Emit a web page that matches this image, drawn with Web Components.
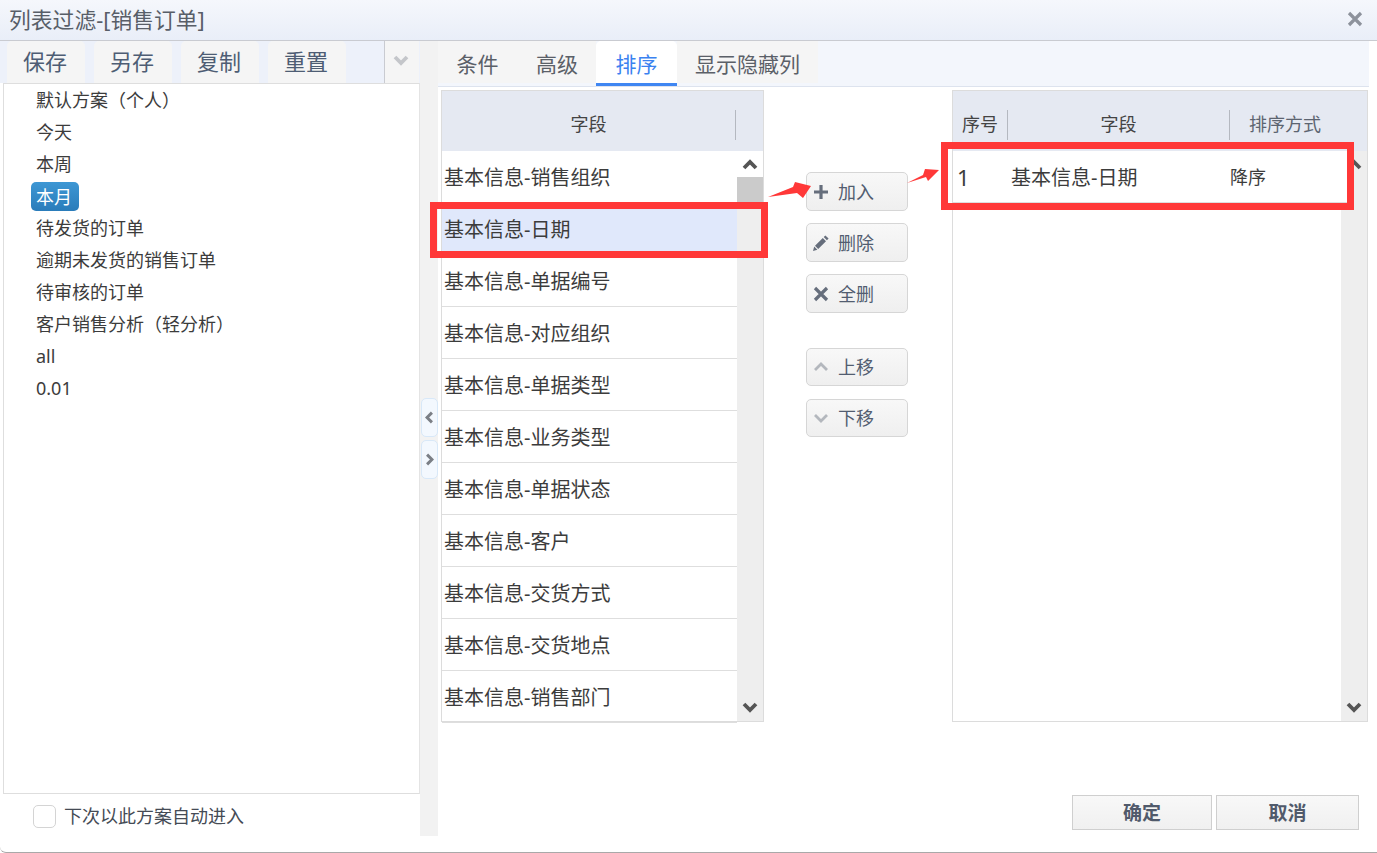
<!DOCTYPE html>
<html lang="zh-CN">
<head>
<meta charset="utf-8">
<title>列表过滤</title>
<style>
    html, body { margin: 0; padding: 0; background: #fff; }
    body { font-family: "Noto Sans", "Noto Sans CJK SC", sans-serif; overflow: hidden; }
</style>
</head>
<body>
<filter-dialog heading="列表过滤-[销售订单]">
    <scheme-panel slot="left"></scheme-panel>
    <sort-pane slot="right"></sort-pane>
</filter-dialog>

<script>
const ICONS = {
    plus: '<path d="M8 1v14M1 8h14" stroke-width="3.2" fill="none"/>',
    edit: '<path d="M12.4 0.4l3.2 3.2-1.7 1.7-3.2-3.2zM9.8 3l3.2 3.2-7.8 7.8-3.2-3.2zM1.2 11.6l3.2 3.2-4.4 1.2z" stroke="none"/>',
    cross: '<path d="M2 2l12 12M14 2l-12 12" stroke-width="3.2" fill="none"/>',
    up: '<path d="M2 11l6-6 6 6" stroke-width="2.8" fill="none" opacity=".45"/>',
    down: '<path d="M2 5l6 6 6-6" stroke-width="2.8" fill="none" opacity=".45"/>',
    left: '<path d="M11 2l-6 6 6 6" stroke-width="3.6" fill="none"/>',
    right: '<path d="M5 2l6 6-6 6" stroke-width="3.6" fill="none"/>',
    chevUp: '<path d="M2 12l6-6 6 6" stroke-width="3.8" fill="none"/>',
    chevDown: '<path d="M2 5l6 6 6-6" stroke-width="3.8" fill="none"/>'
};

function icon(name, size, color) {
    return `<svg width="${size}" height="${size}" viewBox="0 0 16 16" stroke="${color}" fill="${color}">${ICONS[name]}</svg>`;
}

class FilterDialog extends HTMLElement {
    constructor() {
        super();
        this.attachShadow({ mode: 'open' });
    }

    connectedCallback() {
        this.shadowRoot.innerHTML = /*html*/`
        <style>
            :host {
                display: flex;
                flex-direction: column;
                width: 1377px;
                height: 853px;
                box-sizing: border-box;
                border-bottom: 1px solid #a9a9a9;
                border-bottom-left-radius: 6px;
                overflow: hidden;
                background: #fff;
            }
            header {
                display: flex;
                align-items: center;
                justify-content: space-between;
                height: 40px;
                flex: none;
                padding: 0 14px 0 9px;
                border-bottom: 1px solid #c9cbd1;
                background: linear-gradient(#f5f7fc, #e9eef8);
                color: #585e68;
                font-size: 21.8px;
                line-height: 40px;
            }
            header svg { display: block; margin-bottom: 2px; }
            main { display: flex; flex: 1; min-height: 0; }
            .left { display: block; width: 420px; flex: none; }
            .splitter {
                display: flex;
                flex-direction: column;
                gap: 3px;
                width: 18px;
                height: 795px;
                flex: none;
                box-sizing: border-box;
                padding: 357px 0 0 1px;
                background: #f2f2f2;
            }
            .splitter div {
                display: flex;
                align-items: center;
                justify-content: center;
                width: 17px;
                height: 39px;
                box-sizing: border-box;
                background: #f3f8fe;
                border: 1px solid #d8e8f8;
                border-radius: 5px;
            }
            .right { flex: 1; min-width: 0; }
        </style>
        <header>
            <span>${this.getAttribute('heading')}</span>
            ${icon('cross', 16, '#8d929c')}
        </header>
        <main>
            <div class="left"><slot name="left"></slot></div>
            <div class="splitter">
                <div>${icon('left', 13, '#7b7f86')}</div>
                <div>${icon('right', 13, '#7b7f86')}</div>
            </div>
            <div class="right"><slot name="right"></slot></div>
        </main>
        `;
    }
}

class SchemePanel extends HTMLElement {
    constructor() {
        super();
        this.attachShadow({ mode: 'open' });
    }

    connectedCallback() {
        const schemes = ['默认方案（个人）', '今天', '本周', '本月', '待发货的订单', '逾期未发货的销售订单', '待审核的订单', '客户销售分析（轻分析）', 'all', '0.01'];
        const tools = ['保存', '另存', '复制', '重置'];
        this.shadowRoot.innerHTML = /*html*/`
        <style>
            :host { display: block; font-size: 18px; color: #3c3c3c; }
            .toolbar {
                display: flex;
                height: 42px;
                padding-left: 7px;
                gap: 9px;
                background: #edf1fa;
            }
            .toolbar span {
                width: 78px;
                text-align: center;
                text-indent: -2px;
                line-height: 41px;
                font-size: 22px;
                color: #4e5d74;
                background: #f5f5f5;
                border-radius: 5px 5px 0 0;
            }
            .toolbar .more {
                display: flex;
                align-items: center;
                justify-content: center;
                width: 35px;
                margin-left: 29px;
                border-left: 1px solid #c9cbd1;
                border-radius: 0;
                padding: 0 3px 4px 0;
                box-sizing: border-box;
            }
            ul {
                list-style: none;
                height: 711px;
                box-sizing: border-box;
                margin: 0 0 0 3px;
                padding: 0;
                border: 1px solid #dedede;
                border-right-color: #e4e4e4;
            }
            li { height: 32px; line-height: 32px; padding-left: 32px; }
            li span { display: inline-block; height: 29px; line-height: 30px; }
            li.on span {
                margin: 2px 0 0 -5px;
                padding: 0 5px;
                width: 38px;
                line-height: 31px;
                color: #fff;
                border-radius: 5px;
                background: linear-gradient(#3d97d4, #2a7cba);
            }
            label {
                display: flex;
                align-items: center;
                gap: 8px;
                padding: 10px 0 0 33px;
                line-height: 24px;
                color: #454b55;
            }
            i {
                width: 23px;
                height: 23px;
                box-sizing: border-box;
                border: 1px solid #d4d4d4;
                border-radius: 5px;
                background: #fff;
            }
        </style>
        <div class="toolbar">
            ${tools.map(t => `<span>${t}</span>`).join('')}
            <span class="more">${icon('chevDown', 16, '#c4c6ca')}</span>
        </div>
        <ul>
            ${schemes.map(s => `<li class="${s === '本月' ? 'on' : ''}"><span>${s}</span></li>`).join('')}
        </ul>
        <label><i></i>下次以此方案自动进入</label>
        `;
    }
}

class ScrollTrack extends HTMLElement {
    constructor() {
        super();
        this.attachShadow({ mode: 'open' });
    }

    connectedCallback() {
        const thumb = this.hasAttribute('thumb');
        this.shadowRoot.innerHTML = /*html*/`
        <style>
            :host {
                display: flex;
                flex-direction: column;
                justify-content: space-between;
                width: 26px;
                height: 100%;
                background: #eeeeee;
            }
            .end { display: flex; justify-content: center; height: 26px; align-items: center; }
            .end.white { background: #fff; }
            .end.down { margin-bottom: 1px; padding-top: 2px; }
            .thumb { height: 32px; background: #cbcbcb; }
            .top { display: flex; flex-direction: column; }
        </style>
        <div class="top">
            <div class="end ${thumb ? 'white' : ''}">${icon('chevUp', 16, '#555')}</div>
            ${thumb ? '<div class="thumb"></div>' : ''}
        </div>
        <div class="end down">${icon('chevDown', 16, '#555')}</div>
        `;
    }
}

class FieldTable extends HTMLElement {
    constructor() {
        super();
        this.attachShadow({ mode: 'open' });
    }

    connectedCallback() {
        this.shadowRoot.innerHTML = /*html*/`
        <style>
            :host {
                display: block;
                position: relative;
                box-sizing: border-box;
                height: 632px;
                border: 1px solid #dcdcdc;
                background: #fff;
                color: #3c3c3c;
            }
            .head {
                display: flex;
                align-items: center;
                height: 60px;
                background: #e5e9f2;
                font-size: 18px;
                line-height: 28px;
                padding-top: 7px;
                box-sizing: border-box;
            }
            .body { display: flex; height: 570px; }
            .rows { flex: 1; min-width: 0; position: relative; z-index: 1; }
            ::slotted(*) { display: block; }
            scroll-track { flex: none; }
        </style>
        <div class="head"><slot name="head"></slot></div>
        <div class="body">
            <div class="rows"><slot></slot></div>
            <scroll-track ${this.hasAttribute('thumb') ? 'thumb' : ''}></scroll-track>
        </div>
        `;
    }
}

class HeadCell extends HTMLElement {
    constructor() {
        super();
        this.attachShadow({ mode: 'open' });
    }

    connectedCallback() {
        const w = this.getAttribute('w');
        this.shadowRoot.innerHTML = /*html*/`
        <style>
            :host {
                display: block;
                flex: none;
                width: ${w}px;
                box-sizing: border-box;
                text-align: center;
                height: 30px;
                color: var(--head-color, #444);
                border-right: ${this.hasAttribute('plain') ? 'none' : '1px solid #b4b8c0'};
            }
        </style>
        <slot></slot>
        `;
    }
}

class ActionButton extends HTMLElement {
    constructor() {
        super();
        this.attachShadow({ mode: 'open' });
    }

    connectedCallback() {
        const name = this.getAttribute('icon');
        this.shadowRoot.innerHTML = /*html*/`
        <style>
            :host {
                display: flex;
                align-items: center;
                box-sizing: border-box;
                width: 102px;
                height: 39px;
                padding-left: 6px;
                gap: 9px;
                font-size: 18px;
                line-height: 26px;
                color: #525d70;
                border: 1px solid #d6d6d6;
                border-radius: 5px;
                background: linear-gradient(#f8f8f8, #efefef);
            }
            :host([short]) { height: 38px; }
            span { display: flex; width: 16px; justify-content: center; }
        </style>
        <span>${icon(name, 16, '#666e7c')}</span><slot></slot>
        `;
    }
}

class SortPane extends HTMLElement {
    constructor() {
        super();
        this.attachShadow({ mode: 'open' });
    }

    connectedCallback() {
        const tabs = ['条件', '高级', '排序', '显示隐藏列'];
        const widths = [79, 79, 81, 141];
        const fields = ['销售组织', '日期', '单据编号', '对应组织', '单据类型', '业务类型', '单据状态', '客户', '交货方式', '交货地点', '销售部门'];
        this.shadowRoot.innerHTML = /*html*/`
        <style>
            :host { display: block; position: relative; height: 812px; font-size: 20px; }
            .tabs {
                display: flex;
                height: 46px;
                margin-right: 8px;
                box-sizing: border-box;
                border-bottom: 1px solid #dde3ee;
                background: #f3f6fc;
            }
            .tabs span {
                height: 42px;
                line-height: 46px;
                text-align: center;
                font-size: 21px;
                color: #5b6068;
                background: #f5f5f5;
            }
            .tabs span:nth-child(2) { text-indent: 1px; }
            .tabs .on {
                height: 45px;
                box-sizing: border-box;
                color: #3b82f0;
                background: #fff;
                border-bottom: 3px solid #3f86f2;
                border-radius: 5px 5px 0 0;
            }
            .content {
                display: grid;
                grid-template-columns: 323px 188px 416px;
                padding: 3px 0 0 3px;
            }
            .actions { display: flex; flex-direction: column; padding: 82px 0 0 42px; }
            .actions action-button { margin-bottom: 12px; }
            .actions action-button[short] { margin-bottom: 13px; }
            .actions .gap { height: 23px; }
            .row {
                display: block;
                height: 52px;
                line-height: 53px;
                box-sizing: border-box;
                padding-left: 2px;
                border-bottom: 1px solid #dedede;
                white-space: nowrap;
                overflow: hidden;
            }
            .row.sel { background: #e0e8fb; }
            /* the sorted row runs a little under the markup box, over the scrollbar */
            .order { display: flex; padding: 0; margin-right: -6px; background: #fff; }
            .order span:nth-child(1) { width: 58px; padding-left: 4px; box-sizing: border-box; font-size: 22px; }
            .order span:nth-child(2) { width: 219px; }
            .order span:nth-child(3) { font-size: 18px; }
            .foot { display: flex; justify-content: flex-end; gap: 4px; padding: 73px 18px 0 0; }
            .foot span {
                width: 140px;
                height: 35px;
                box-sizing: border-box;
                text-align: center;
                line-height: 35px;
                font-size: 19px;
                font-weight: 700;
                color: #505a6b;
                border: 1px solid #cfcfcf;
                background: linear-gradient(#f8f8f8, #f0f0f0);
            }
            .foot span:last-child { width: 143px; }
            /* markup drawn on top of the screenshot */
            .mark { position: absolute; z-index: 2; box-sizing: border-box; border: 7px solid #ff3838; pointer-events: none; }
            .arrows { position: absolute; z-index: 2; left: 0; top: 0; pointer-events: none; }
            .r1 { left: -8px; top: 161px; width: 338px; height: 56px; }
            .r2 { left: 503px; top: 101px; width: 413px; height: 68px; }
            .sep { --head-color: #5c6470; }
        </style>
        <div class="tabs">
            ${tabs.map((t, i) => `<span class="${i === 2 ? 'on' : ''}" style="width:${widths[i]}px">${t}</span>`).join('')}
        </div>
        <div class="content">
            <field-table thumb>
                <head-cell slot="head" w="294">字段</head-cell>
                ${fields.map((f, i) => `<div class="row ${i === 1 ? 'sel' : ''}">基本信息-${f}</div>`).join('')}
            </field-table>
            <div class="actions">
                <action-button icon="plus">加入</action-button>
                <action-button icon="edit">删除</action-button>
                <action-button icon="cross">全删</action-button>
                <div class="gap"></div>
                <action-button icon="up" short>上移</action-button>
                <action-button icon="down" short>下移</action-button>
            </div>
            <field-table>
                <head-cell slot="head" w="55">序号</head-cell>
                <head-cell slot="head" w="222">字段</head-cell>
                <head-cell slot="head" w="110" plain class="sep">排序方式</head-cell>
                <div class="row order"><span>1</span><span>基本信息-日期</span><span>降序</span></div>
            </field-table>
        </div>
        <div class="foot"><span>确定</span><span>取消</span></div>
        <div class="mark r1"></div>
        <div class="mark r2"></div>
        <svg class="arrows" width="520" height="170" viewBox="438 41 520 170">
            <path d="M768 197L793 187L795 182L811 186L803 198L797 193Z" fill="#ff3838"/>
            <path d="M907 183L923 175L925 169L939 170L928 181L926 177Z" fill="#ff3838"/>
        </svg>
        `;
    }
}

customElements.define('filter-dialog', FilterDialog);
customElements.define('scheme-panel', SchemePanel);
customElements.define('scroll-track', ScrollTrack);
customElements.define('field-table', FieldTable);
customElements.define('head-cell', HeadCell);
customElements.define('action-button', ActionButton);
customElements.define('sort-pane', SortPane);
</script>
</body>
</html>
